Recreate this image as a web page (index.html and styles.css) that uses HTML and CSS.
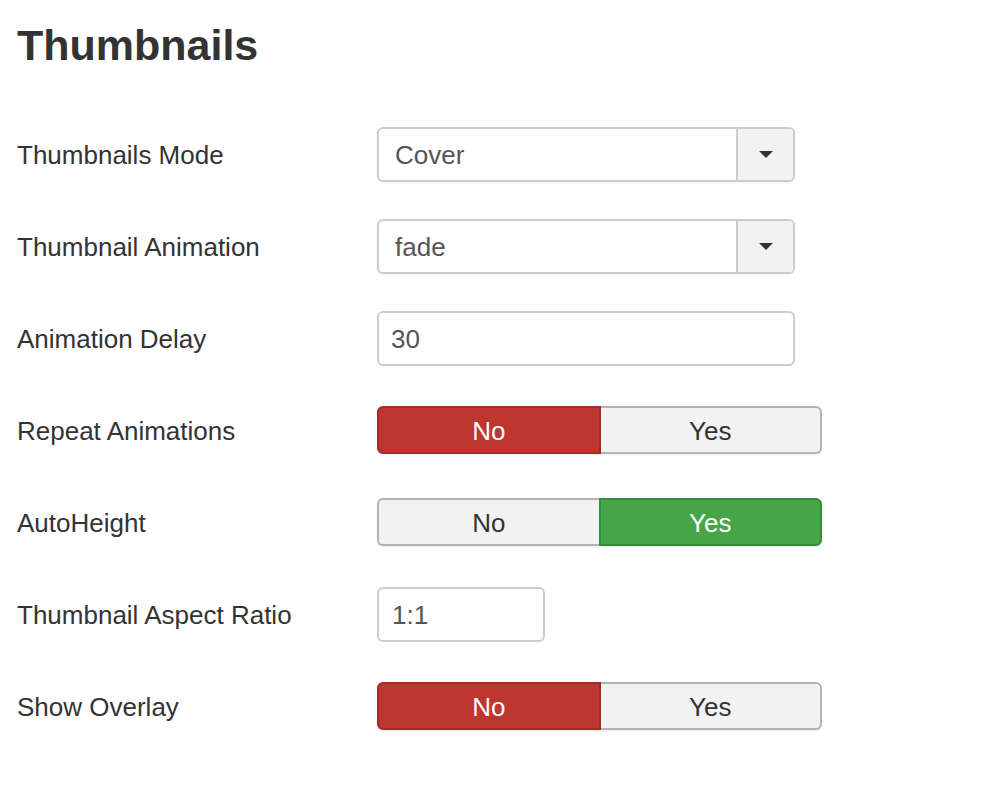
FILE: index.html
```html
<!DOCTYPE html>
<html>
<head>
<meta charset="utf-8">
<link rel="stylesheet" href="styles.css">
</head>
<body>
<div class="page">
  <h1 class="title">Thumbnails</h1>
  <div class="form">
    <div class="row">
      <div class="label">Thumbnails Mode</div>
      <div class="select"><span class="value">Cover</span><span class="drop"><span class="caret"></span></span></div>
    </div>
    <div class="row">
      <div class="label">Thumbnail Animation</div>
      <div class="select"><span class="value">fade</span><span class="drop"><span class="caret"></span></span></div>
    </div>
    <div class="row">
      <div class="label">Animation Delay</div>
      <div class="input">30</div>
    </div>
    <div class="row">
      <div class="label">Repeat Animations</div>
      <div class="toggle"><span class="opt no active">No</span><span class="opt yes">Yes</span></div>
    </div>
    <div class="row">
      <div class="label">AutoHeight</div>
      <div class="toggle"><span class="opt no">No</span><span class="opt yes active">Yes</span></div>
    </div>
    <div class="row">
      <div class="label">Thumbnail Aspect Ratio</div>
      <div class="input small">1:1</div>
    </div>
    <div class="row">
      <div class="label">Show Overlay</div>
      <div class="toggle"><span class="opt no active">No</span><span class="opt yes">Yes</span></div>
    </div>
  </div>
</div>
</body>
</html>
```

FILE: styles.css
```css
html, body {
  margin: 0;
  padding: 0;
  background: #fff;
}
body {
  font-family: "Liberation Sans", Arial, sans-serif;
  color: #333;
}
.page {
  padding: 0 17px;
}
.title {
  font-size: 43px;
  font-weight: bold;
  line-height: 52px;
  margin: 0;
  padding-top: 19px;
  color: #333;
}
.form {
  display: flex;
  flex-direction: column;
  gap: 38px;
  padding-top: 56px;
}
.row {
  display: flex;
  align-items: center;
  height: 54px;
}
.label {
  width: 360px;
  font-size: 26px;
  color: #333;
  padding-top: 2px;
}
.select {
  box-sizing: border-box;
  width: 418px;
  height: 55px;
  border: 2px solid #ccc;
  border-radius: 6px;
  display: flex;
  background: #fff;
  box-shadow: 0 1px 2px rgba(0,0,0,0.05);
}
.select .value {
  flex: 1;
  font-size: 26px;
  color: #555;
  padding-left: 16px;
  line-height: 53px;
}
.select .drop {
  width: 55px;
  border-left: 2px solid #ccc;
  background: #f2f2f2;
  border-radius: 0 4px 4px 0;
  display: flex;
  align-items: center;
  justify-content: center;
}
.caret {
  width: 0;
  height: 0;
  border-left: 7px solid transparent;
  border-right: 7px solid transparent;
  border-top: 7px solid #333;
  margin-top: 1px;
}
.input {
  box-sizing: border-box;
  width: 418px;
  height: 55px;
  border: 2px solid #ccc;
  border-radius: 6px;
  font-size: 26px;
  color: #555;
  padding-left: 12px;
  line-height: 53px;
}
.input.small {
  width: 168px;
  padding-left: 13px;
}
.toggle {
  box-sizing: border-box;
  width: 445px;
  height: 48px;
  display: flex;
  border-radius: 6px;
  box-shadow: 0 1px 2px rgba(0,0,0,0.08);
}
.opt {
  flex: 1;
  box-sizing: border-box;
  height: 48px;
  display: flex;
  align-items: center;
  justify-content: center;
  font-size: 26px;
  padding-top: 2px;
  color: #333;
  background: #f2f2f2;
  border: 2px solid #b3b3b3;
}
.opt.no {
  border-radius: 6px 0 0 6px;
  border-right: none;
}
.opt.yes {
  border-radius: 0 6px 6px 0;
}
.opt.no.active {
  background: #bd362f;
  border-color: #a42a24;
  border-right: 2px solid #a42a24;
  color: #fff;
}
.opt.no.active + .opt.yes {
  border-left: none;
}
.opt.yes.active {
  background: #46a546;
  border-color: #378d37;
  color: #fff;
}
```
